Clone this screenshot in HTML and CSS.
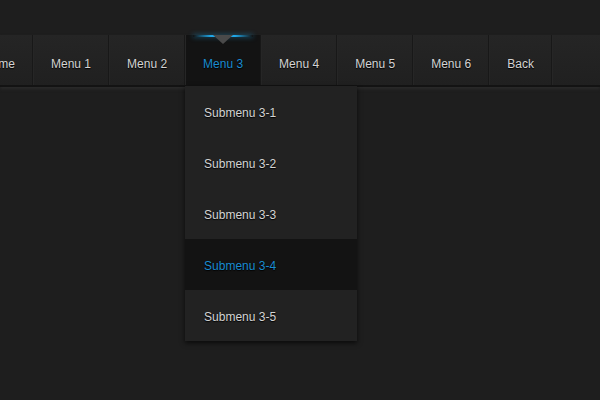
FILE: index.html
```html
<!DOCTYPE html>
<html>
<head>
<meta charset="utf-8">
<link rel="stylesheet" href="styles.css">
</head>
<body>
<div class="page">
  <nav class="bar">
    <ul class="menu">
      <li class="item"><a href="#">Home</a></li>
      <li class="item"><a href="#">Menu 1</a></li>
      <li class="item"><a href="#">Menu 2</a></li>
      <li class="item active"><a href="#">Menu 3</a>
        <ul class="sub">
          <li><a href="#">Submenu 3-1</a></li>
          <li><a href="#">Submenu 3-2</a></li>
          <li><a href="#">Submenu 3-3</a></li>
          <li class="hover"><a href="#">Submenu 3-4</a></li>
          <li><a href="#">Submenu 3-5</a></li>
        </ul>
      </li>
      <li class="item"><a href="#">Menu 4</a></li>
      <li class="item"><a href="#">Menu 5</a></li>
      <li class="item"><a href="#">Menu 6</a></li>
      <li class="item"><a href="#">Back</a></li>
      <li class="item last"></li>
    </ul>
  </nav>
</div>
</body>
</html>
```
FILE: styles.css
```css
html, body {
  margin: 0;
  padding: 0;
  background: #1e1e1e;
  height: 100%;
  overflow: hidden;
}
body {
  font-family: "Liberation Sans", Arial, sans-serif;
  font-size: 12px;
}
.page {
  padding-top: 35px;
}
.bar {
  height: 50px;
  background: linear-gradient(#252525, #202020);
  border-bottom: 2px solid #131313;
  box-shadow: 0 2px 3px #2a2a2a;
}
.menu {
  list-style: none;
  margin: 0 0 0 -35px;
  padding: 0;
  display: flex;
  height: 50px;
}
.item {
  position: relative;
  height: 50px;
  flex-shrink: 0;
  white-space: nowrap;
}
.item + .item {
  border-left: 1px solid #181818;
  box-shadow: inset 1px 0 0 #262626;
}
.item > a {
  display: block;
  height: 50px;
  line-height: 58px;
  padding: 0 17px 0 18px;
  color: #d4d4d4;
  text-decoration: none;
  text-shadow: 0 1px 1px #000;
}
.item.active {
  background: #131313;
}
.item.active > a {
  color: #1a8bd0;
}
.item.active::before {
  content: "";
  position: absolute;
  top: 0;
  left: 8px;
  width: 60px;
  height: 2px;
  background: linear-gradient(90deg, transparent, #1fa7e8 30%, #1fa7e8 70%, transparent);
  box-shadow: 0 0 5px rgba(31, 167, 232, 0.6);
}
.item.active::after {
  content: "";
  position: absolute;
  top: 0;
  left: 28px;
  border-left: 10px solid transparent;
  border-right: 10px solid transparent;
  border-top: 9px solid #4a4a4a;
}
.item.last {
  flex: 1 0 60px;
}
.sub {
  position: absolute;
  top: 51px;
  left: 0;
  width: 172px;
  list-style: none;
  margin: 0;
  padding: 0;
  background: #222;
  box-shadow: 0 2px 5px rgba(0, 0, 0, 0.7);
  z-index: 2;
}
.sub li a {
  display: block;
  height: 51px;
  line-height: 54px;
  padding: 0 19px;
  color: #d4d4d4;
  text-decoration: none;
  text-shadow: 0 1px 1px #000;
}
.sub li.hover {
  background: #131313;
}
.sub li.hover a {
  color: #1a8bd0;
}
```
